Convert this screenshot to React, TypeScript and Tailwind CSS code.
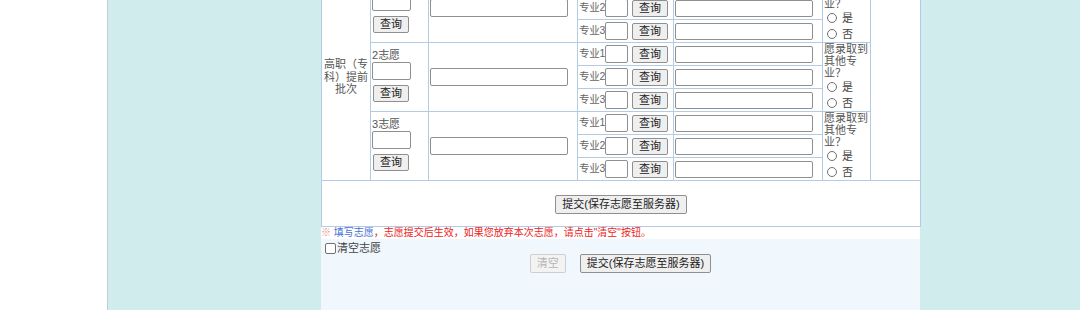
import React from 'react';

const cell = 'border border-[#b3cbe3] p-0';

const Btn = ({ children, disabled = false, wide = false }: { children: React.ReactNode; disabled?: boolean; wide?: boolean }) => (
  <button
    type="button"
    disabled={disabled}
    className={
      (wide ? 'h-[19px] px-[6px] ' : 'h-[17px] px-[6px] ') +
      (disabled
        ? 'text-[#b5b5b5] bg-[#f3f3f3] border-[#cfcfcf] '
        : 'text-[#222] bg-[#efefef] border-[#8f8f8f] ') +
      'border rounded-[2px] text-[11px] leading-none whitespace-nowrap align-middle'
    }
  >
    {children}
  </button>
);

const Field = ({ w, h = 18 }: { w: string; h?: number }) => (
  <input
    type="text"
    className={`${w} ${h === 18 ? 'h-[18px]' : 'h-[17px]'} border border-[#8f8f8f] rounded-[2px] bg-white align-middle`}
  />
);

const Radio = ({ label }: { label: string }) => (
  <label className="flex items-center gap-[5px] h-[16px] pl-[3px]">
    <span className="w-[10px] h-[10px] rounded-full border border-[#6f6f6f] bg-white" />
    <span className="text-[#444]">{label}</span>
  </label>
);

const Group = ({ n, first }: { n: number; first: boolean }) => (
  <>
    {[1, 2, 3].map((m) => (
      <tr key={m} className="h-[23px]">
        {first && m === 1 && (
          <td rowSpan={9} className={`${cell} px-[2px] text-center align-middle text-[11px] leading-[12.5px] text-[#555]`}>
            高职（专科）提前批次
          </td>
        )}
        {m === 1 && (
          <td rowSpan={3} className={`${cell} pl-px align-middle`}>
            <div className="text-[11px] leading-[13px] text-[#555] whitespace-nowrap">{n}志愿</div>
            <Field w="w-[39px] block" />
            <div className="mt-px pl-px">
              <Btn>查询</Btn>
            </div>
          </td>
        )}
        {m === 1 && (
          <td rowSpan={3} className={`${cell} pl-px align-middle`}>
            <Field w="w-[138px] block" />
          </td>
        )}
        <td className={`${cell} align-middle`}>
          <div className="flex items-center h-[22px]">
            <span className="text-[10.5px] tracking-[-0.3px] text-[#666] pl-px whitespace-nowrap">专业{m}</span>
            <Field w="w-[23px]" />
            <span className="ml-[4px]">
              <Btn>查询</Btn>
            </span>
          </div>
        </td>
        <td className={`${cell} pl-px align-middle`}>
          <Field w="w-[138px] block" h={17} />
        </td>
        {m === 1 && (
          <td rowSpan={3} className={`${cell} align-top pl-px text-[11px] leading-[12px] text-[#555]`}>
            <div>愿录取到其他专业？</div>
            <Radio label="是" />
            <Radio label="否" />
          </td>
        )}
        {first && m === 1 && <td rowSpan={9} className={cell} />}
      </tr>
    ))}
  </>
);

export default function App() {
  return (
    <div
      className="h-[310px] overflow-hidden bg-white"
      style={{ fontFamily: '"Liberation Sans", "Noto Sans CJK SC", sans-serif' }}
    >
      <div className="ml-[107px] h-full border-l border-[#c4cfcf] bg-[#d1ecec] pl-[213px]">
        <div className="w-[599px] h-full flex flex-col bg-[#f0f7fd]">
          <table className="-mt-[27px] w-[599px] table-fixed border-collapse bg-white border border-[#a3bdd6]">
            <colgroup>
              <col className="w-[49px]" />
              <col className="w-[58px]" />
              <col className="w-[149px]" />
              <col className="w-[96px]" />
              <col className="w-[149px]" />
              <col className="w-[48px]" />
              <col className="w-[50px]" />
            </colgroup>
            <tbody>
              <Group n={1} first />
              <Group n={2} first={false} />
              <Group n={3} first={false} />
              <tr className="h-[46px]">
                <td colSpan={7} className={`${cell} text-center align-middle`}>
                  <Btn wide>提交(保存志愿至服务器)</Btn>
                </td>
              </tr>
            </tbody>
          </table>
          <div className="bg-white h-[12px] text-[10px] leading-[12px] whitespace-nowrap">
            <span className="text-[#f08a8a]">※ </span>
            <span className="text-[#4a6fd6]">填写志愿</span>
            <span className="text-[#ee2222]">，志愿提交后生效，如果您放弃本次志愿，请点击"清空"按钮。</span>
          </div>
          <label className="flex items-center mt-[3px] pl-[4px] h-[12px] text-[11px] text-[#444]">
            <span className="w-[11px] h-[11px] border border-[#6f6f6f] rounded-[2px] bg-white mr-px" />
            清空志愿
          </label>
          <div className="flex justify-center gap-[14px]">
            <Btn wide disabled>清空</Btn>
            <Btn wide>提交(保存志愿至服务器)</Btn>
          </div>
        </div>
      </div>
    </div>
  );
}
